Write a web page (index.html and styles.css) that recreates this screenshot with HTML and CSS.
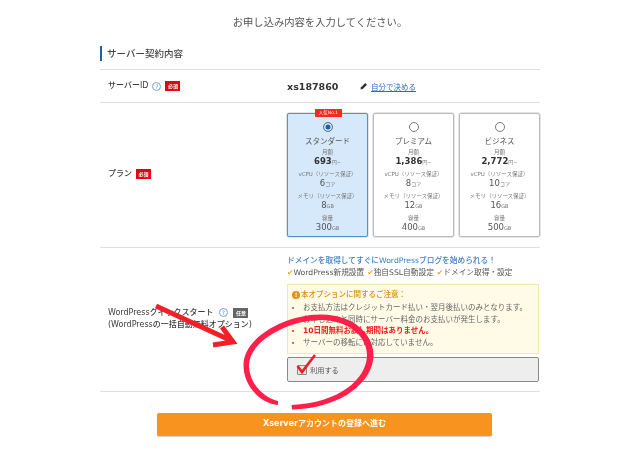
FILE: index.html
```html
<!DOCTYPE html>
<html lang="ja">
<head>
  <meta charset="UTF-8">
  <title>お申し込み内容の入力</title>
  <link rel="stylesheet" href="styles.css">
</head>
<body>
  <div class="container">
    <p class="lead">お申し込み内容を入力してください。</p>
    <h2 class="section-title">サーバー契約内容</h2>

    <div class="form-row row-id">
      <div class="row-label">
        <span>サーバーID</span>
        <span class="help">?</span>
        <span class="badge">必須</span>
      </div>
      <div class="row-value id-value">
        <span class="server-id">xs187860</span>
        <svg class="pencil" width="8" height="8" viewBox="0 0 9 9"><path d="M0.5 8.5l0.6-2.6 4.8-4.8 2 2-4.8 4.8z" fill="#333"/></svg>
        <a class="id-link" href="#">自分で決める</a>
      </div>
    </div>

    <div class="form-row row-plan">
      <div class="row-label">
        <span>プラン</span>
        <span class="badge">必須</span>
      </div>
      <div class="plans">
        <div class="plan selected">
          <span class="plan-tag">人気No.1</span>
          <span class="radio"></span>
          <div class="plan-name">スタンダード</div>
          <div class="spec">月額</div>
          <div class="price">693<small>円~</small></div>
          <div class="spec">vCPU（リソース保証）</div>
          <div class="amount">6<small>コア</small></div>
          <div class="spec">メモリ（リソース保証）</div>
          <div class="amount">8<small>GB</small></div>
          <div class="spec">容量</div>
          <div class="amount">300<small>GB</small></div>
        </div>
        <div class="plan">
          <span class="radio"></span>
          <div class="plan-name">プレミアム</div>
          <div class="spec">月額</div>
          <div class="price">1,386<small>円~</small></div>
          <div class="spec">vCPU（リソース保証）</div>
          <div class="amount">8<small>コア</small></div>
          <div class="spec">メモリ（リソース保証）</div>
          <div class="amount">12<small>GB</small></div>
          <div class="spec">容量</div>
          <div class="amount">400<small>GB</small></div>
        </div>
        <div class="plan">
          <span class="radio"></span>
          <div class="plan-name">ビジネス</div>
          <div class="spec">月額</div>
          <div class="price">2,772<small>円~</small></div>
          <div class="spec">vCPU（リソース保証）</div>
          <div class="amount">10<small>コア</small></div>
          <div class="spec">メモリ（リソース保証）</div>
          <div class="amount">16<small>GB</small></div>
          <div class="spec">容量</div>
          <div class="amount">500<small>GB</small></div>
        </div>
      </div>
    </div>

    <div class="form-row row-wp">
      <div class="row-label wp-label">
        <div>
          <span>WordPressクイックスタート</span>
          <span class="help">?</span>
          <span class="badge badge-gray">任意</span>
        </div>
        <div>(WordPressの一括自動無料オプション)</div>
      </div>
      <div class="row-value">
        <p class="promo">ドメインを取得してすぐにWordPressブログを始められる！</p>
        <ul class="features">
          <li>WordPress新規設置</li>
          <li>独自SSL自動設定</li>
          <li>ドメイン取得・設定</li>
        </ul>
        <div class="notice">
          <p class="notice-title"><span class="notice-icon">!</span>本オプションに関するご注意：</p>
          <ul class="notice-list">
            <li>お支払方法はクレジットカード払い・翌月後払いのみとなります。</li>
            <li>お申し込みと同時にサーバー料金のお支払いが発生します。</li>
            <li class="alert">10日間無料お試し期間はありません。</li>
            <li>サーバーの移転には対応していません。</li>
          </ul>
        </div>
        <label class="use-box"><span class="checkbox"></span>利用する</label>
      </div>
    </div>

    <div class="actions">
      <a class="next-btn" href="#">Xserverアカウントの登録へ進む</a>
    </div>
  </div>

  <!-- 手描きの赤い注釈 -->
  <svg class="markup" width="640" height="450" viewBox="0 0 640 450">
    <path class="ring" d="M278 405C260 403 243.5 386 243.5 365C243.5 338 284 315 320 314.5C353 314 373.5 334 373.5 355C373.5 382 341 408.5 292 409.5L291.5 405C339 403 367 379 367 355C367 336 348 320 320 320C287 320.5 249 342 249 365C249 383 263 397 278 401Z"/>
    <path class="arrow" d="M156 306L232 341M222 327L233 342L213 345"/>
    <path class="tick" d="M297.5 366L302 372L315 355"/>
  </svg>
</body>
</html>
```

FILE: styles.css
```css
:root {
  --text-color: #444;
  --line-color: #ddd;
  --primary-color: #1a62b0;
  --required-color: #e60012;
  --orange-color: #f7931e;
}

html, body {
  margin: 0;
  padding: 0;
  background: #fff;
}

body {
  position: relative;
  width: 640px;
  height: 450px;
  overflow: hidden;
  font-family: "DejaVu Sans", "Noto Sans CJK JP", sans-serif;
  color: var(--text-color);
}

.container {
  width: 440px;
  margin: 0 auto;
  filter: blur(0.3px);
}

.lead {
  margin: 0;
  padding-top: 14px;
  height: 31px;
  line-height: 16px;
  font-size: 10.3px;
  text-align: center;
  color: #555;
}

.section-title {
  margin: 0;
  height: 23px;
  padding-top: 1px;
  line-height: 15px;
  font-size: 9.5px;
  font-weight: 500;
  color: #444;
}

.section-title::before {
  content: "";
  display: inline-block;
  width: 2px;
  height: 15px;
  margin-right: 5px;
  vertical-align: top;
  background: var(--primary-color);
}

.form-row {
  display: grid;
  grid-template-columns: 187px 1fr;
  border-top: 1px solid var(--line-color);
}

.row-id {
  height: 32px;
  align-items: center;
}

.row-plan {
  height: 144px;
  align-items: center;
}

.row-plan .row-label {
  margin-bottom: 2px;
}

.row-wp {
  height: 143px;
  border-bottom: 1px solid var(--line-color);
}

.row-label {
  padding-left: 8px;
  font-size: 8px;
  font-weight: 500;
  line-height: 12px;
  color: #3c3c3c;
  display: flex;
  align-items: center;
  gap: 4px;
}

.wp-label {
  display: block;
  margin-top: 59px;
}

.wp-label span {
  margin-right: 3px;
}

.help {
  display: inline-block;
  width: 7px;
  height: 7px;
  line-height: 7px;
  border: 1px solid #7aa3cc;
  border-radius: 50%;
  text-align: center;
  font-size: 6px;
  font-weight: 400;
  color: #5b8fc2;
}

.badge {
  display: inline-block;
  width: 15px;
  height: 10px;
  line-height: 10px;
  text-align: center;
  font-size: 5px;
  font-weight: 700;
  color: #fff;
  background: var(--required-color);
}

.badge-gray {
  background: #666;
}

.id-value {
  display: flex;
  align-items: center;
}

.server-id {
  font-size: 9.5px;
  font-weight: 700;
  color: #333;
  width: 73px;
}

.pencil {
  margin-right: 3px;
}

.id-link {
  font-size: 7.5px;
  color: #2b6cc4;
}

.plans {
  display: flex;
  gap: 5px;
  height: 124px;
}

.plan {
  position: relative;
  width: 81px;
  height: 124px;
  box-sizing: border-box;
  padding-top: 8px;
  border: 1px solid #bbb;
  border-radius: 2px;
  text-align: center;
  color: #555;
  box-shadow: 0 0 0 0.5px #ccc;
}

.plan.selected {
  background: #d5e9fb;
  border-color: #5b8fc2;
}

.plan-tag {
  position: absolute;
  top: -5px;
  left: 27px;
  width: 27px;
  height: 8px;
  line-height: 8px;
  font-size: 4.5px;
  color: #fff;
  background: #f42a1c;
}

.radio {
  display: block;
  width: 8px;
  height: 8px;
  margin: 0 auto 4px;
  border: 1px solid #777;
  border-radius: 50%;
  background: #fff;
}

.selected .radio {
  background: var(--primary-color);
  box-shadow: inset 0 0 0 1.5px #d5e9fb;
}

.plan-name {
  font-size: 7.5px;
  line-height: 12px;
  color: #555;
}

.spec {
  margin-top: 2px;
  font-size: 5.5px;
  line-height: 8px;
  color: #777;
}

.plan-name + .spec {
  margin-top: 0;
}

.price {
  margin-bottom: 1px;
  font-size: 8.5px;
  font-weight: 700;
  line-height: 11px;
  color: #333;
}

.amount {
  font-size: 8.5px;
  line-height: 11px;
  color: #555;
}

.price small,
.amount small {
  font-size: 5px;
  font-weight: 400;
  color: #777;
}

.promo {
  margin: 7px 0 0;
  font-size: 7.7px;
  line-height: 12px;
  font-weight: 500;
  color: #3d7cc4;
}

.features {
  display: flex;
  gap: 3px;
  height: 12px;
  margin: 0 0 5px;
  padding: 0;
  list-style: none;
  font-size: 7.7px;
  line-height: 12px;
  color: #555;
}

.features li::before {
  content: "✔";
  color: #f5a623;
}

.notice {
  width: 252px;
  height: 70px;
  box-sizing: border-box;
  padding: 4px 0 0 4px;
  border: 1px solid #f3e7b0;
  background: #fffbe6;
}

.notice-title {
  margin: 0 0 1px;
  font-size: 7.5px;
  line-height: 12px;
  font-weight: 500;
  color: #d98e0b;
  display: flex;
  align-items: center;
  gap: 1px;
}

.notice-icon {
  width: 8px;
  height: 8px;
  line-height: 8px;
  border-radius: 50%;
  text-align: center;
  font-size: 6px;
  font-weight: 700;
  color: #fff;
  background: #e0950e;
}

.notice-list {
  margin: 0;
  padding: 0 0 0 11px;
  font-size: 7.5px;
  line-height: 11.7px;
  color: #666;
}

.notice-list .alert {
  font-weight: 700;
  color: #f01c1c;
}

.use-box {
  display: flex;
  align-items: center;
  gap: 3px;
  width: 252px;
  height: 25px;
  box-sizing: border-box;
  margin-top: 3px;
  padding-left: 9px;
  border: 1px solid #888;
  border-radius: 2px;
  background: #eee;
  font-size: 7.2px;
  color: #555;
}

.checkbox {
  width: 8px;
  height: 8px;
  border: 1px solid #888;
  border-radius: 1px;
  background: #e4e4e4;
}

.actions {
  display: flex;
  justify-content: center;
  padding: 21px 0 0 9px;
}

.next-btn {
  display: block;
  width: 335px;
  height: 23px;
  line-height: 22px;
  text-align: center;
  text-decoration: none;
  font-size: 8px;
  font-weight: 700;
  color: #fff;
  background: var(--orange-color);
  border-radius: 2px;
  box-shadow: 0 1px 1px #c9ccd4;
}

/* annotations over the form */
.markup {
  position: absolute;
  top: 0;
  left: 0;
  pointer-events: none;
}

.ring {
  fill: #ff1f4b;
}

.arrow {
  fill: none;
  stroke: #f01f28;
  stroke-width: 5;
}

.tick {
  fill: none;
  stroke: #ee1c25;
  stroke-width: 2.6;
}
```
